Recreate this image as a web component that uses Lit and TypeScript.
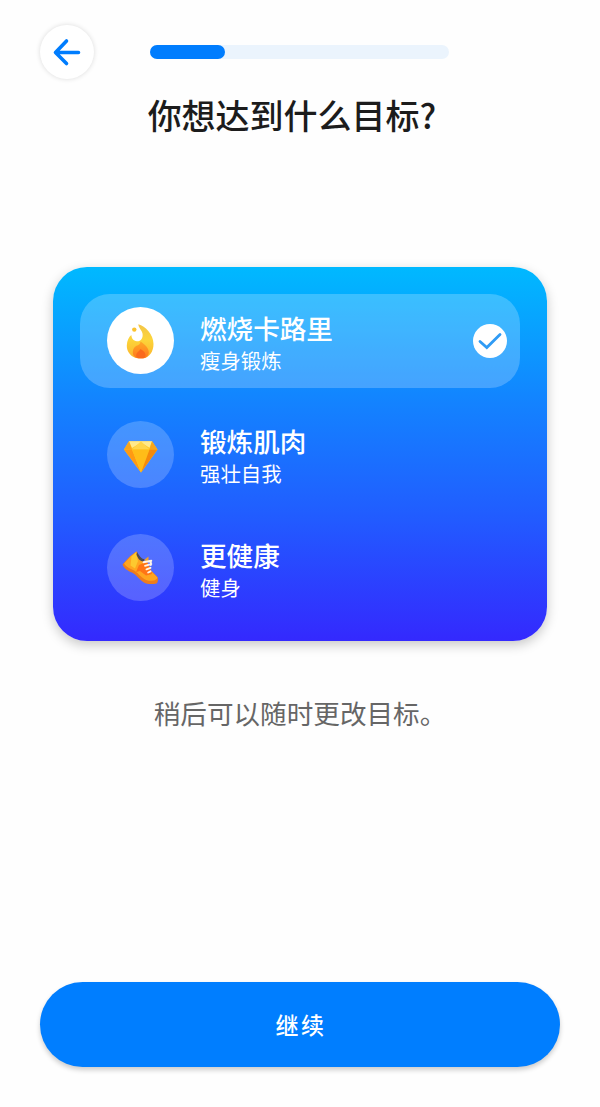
import { LitElement, html, css, svg } from 'lit';
import { customElement, property, state } from 'lit/decorators.js';
import { classMap } from 'lit/directives/class-map.js';

const flame = svg`
  <defs>
    <linearGradient id="fo" x1="0" y1="0" x2="0" y2="1">
      <stop offset="0" stop-color="#f3c548"/><stop offset=".45" stop-color="#fcd53a"/><stop offset="1" stop-color="#fbb42c"/>
    </linearGradient>
    <linearGradient id="fi" x1="0" y1="0" x2="0" y2="1">
      <stop offset="0" stop-color="#ffa827"/><stop offset="1" stop-color="#ff7a1c"/>
    </linearGradient>
  </defs>
  <path fill="url(#fo)" d="M31.300 17.300C38.500 19.500 46.300 27 46.500 37C46.500 44.500 42.500 51 35.500 51.300H30.500C24 50.500 19.600 44.500 19.800 38.500C20 33.500 21.800 30 24.300 28C24.800 31.500 26 33.800 30 34.300C34.200 34.300 36.300 30.500 35.500 26.500C34.800 23 31.500 21 31.300 17.300Z"/>
  <circle cx="27.300" cy="22.600" r="2.200" fill="#fbc22f"/>
  <path fill="url(#fi)" d="M33.500 34.500C37.500 37 42 41 41.800 45.500C41.500 49.300 38.800 51.300 35.500 51.300H31.500C28 51 25.600 48.500 25.800 45C26 42 27.500 39.800 29.500 38.800C31.500 38.500 33.300 37 33.500 34.500Z"/>
  <path fill="#fa6a1c" d="M33.500 42C36.800 44 38.800 46 38.500 48.500C38.200 50.500 36.800 51.300 35 51.300H32C30 51 29 49.800 29.200 48C29.500 45.500 32 44.500 33.500 42Z"/>`;

const gem = svg`
  <path fill="#ffc928" d="M22 20.300H45L50.500 28.500L34 51.500L17 28.500Z"/>
  <path fill="#ffe98c" d="M22 20.300H45L42.500 26.800L34 21.500L25 27Z"/>
  <path fill="#ffd54a" d="M34 20.300L42.500 28.500H25Z"/>
  <path fill="#f9a51b" d="M22 20.300L25 28.500H17ZM45 20.300L50.500 28.500H42.500Z"/>
  <path fill="#ff9a12" d="M17 28.500H25L34 51.500Z"/>
  <path fill="#ffbd18" d="M25 28.500H42.500L34 51.500Z"/>
  <path fill="#f58a0b" d="M50.500 28.500H42.500L34 51.500Z"/>`;

const shoe = svg`
  <path fill="#ef7d1a" d="M15.500 30.500L23 22.300L29.500 17.500L33 23L41 33.500L50 42.500C51.500 44.500 51.200 47 50 49.200C46 50.500 40 50.300 37 48.500C32 45.500 29.500 40.500 25 38.500C21 37 17 34.500 15.500 30.500Z"/>
  <path fill="#ffa51f" d="M17 29.500L24 22L29.500 17.500L32.500 24L41 34L50.500 43.500C49.500 47.500 41.500 47.500 38 45.500C33 42.500 30.500 38 26 36C22.500 34.500 18.500 32.500 17 29.500Z"/>
  <path fill="#fdc92f" d="M24.500 22.500L29 18.500L31 27L28 34.500L23.500 31.500Z"/>
  <path fill="#ff7416" d="M32 31L40 27.500L43.500 35L45 40L39 41.500L33 37L29 38Z"/>
  <path fill="#4a4a55" d="M30 18C31.500 20.500 34 25 37.700 25.300L36.500 27.500C32.500 27.500 30.500 23.500 29.500 20.500Z"/>
  <path fill="#f0a12a" d="M37.700 25.500L41.500 22.500L41.500 27L38 29Z"/>
  <path fill="none" stroke="#fff5e8" stroke-width="1.900" stroke-linecap="round" d="M36.500 28.300L44.300 26.700M38 31.800L44.300 30M39.500 35.300L43.500 33.800M41.200 38.500L43.500 37.300M43.800 27V31"/>`;

@customElement('goal-option')
class GoalOption extends LitElement {
  @property() heading = '';
  @property() caption = '';
  @property({ attribute: false }) icon: unknown;
  @property({ type: Boolean }) selected = false;

  static styles = css`
    :host { display: block; }
    .row {
      display: flex; align-items: center; box-sizing: border-box;
      height: 93.500px; padding: 0 13px 0 26.500px; border-radius: 30px; cursor: pointer;
    }
    .row.on { background: rgba(255, 255, 255, .22); }
    .disc {
      width: 67px; height: 67px; border-radius: 50%; flex: none;
      background: rgba(255, 255, 255, .2);
    }
    .on .disc { background: #fff; }
    .disc svg { display: block; width: 67px; height: 67px; }
    .text { flex: 1; padding: 2px 0 0 26.500px; color: #fff; }
    .heading { font-size: 26.600px; line-height: 36px; font-weight: 500; }
    .caption { font-size: 20.400px; line-height: 28px; }
    .check { width: 34px; height: 34px; flex: none; }
  `;

  render() {
    return html`
      <div class=${classMap({ row: true, on: this.selected })}>
        <div class="disc"><svg viewBox="0 0 67 67">${this.icon}</svg></div>
        <div class="text">
          <div class="heading">${this.heading}</div>
          <div class="caption">${this.caption}</div>
        </div>
        ${this.selected
          ? html`<svg class="check" viewBox="0 0 34 34">
              <circle cx="17" cy="17" r="17" fill="#fff"/>
              <path d="M7 17.500L13.800 23.500L27 10.500" fill="none" stroke="#2f9bf5" stroke-width="2.800" stroke-linecap="round"/>
            </svg>`
          : ''}
      </div>`;
  }
}

const goals = [
  { heading: '燃烧卡路里', caption: '瘦身锻炼', icon: flame },
  { heading: '锻炼肌肉', caption: '强壮自我', icon: gem },
  { heading: '更健康', caption: '健身', icon: shoe },
];

@customElement('app-root')
class AppRoot extends LitElement {
  @state() private chosen = 0;
  private progress = 25;

  static styles = css`
    :host {
      display: flex; flex-direction: column; box-sizing: border-box;
      height: 1107px; padding: 24px 40px 40px; background: #fefefe; overflow: hidden;
      font-family: "Noto Sans CJK SC", sans-serif;
    }
    header { display: flex; align-items: center; height: 55px; }
    .back {
      width: 54px; height: 54px; border: 0; padding: 0; border-radius: 50%; background: #fff;
      box-shadow: 0 0 5px rgba(0, 0, 0, .14);
    }
    .back svg { display: block; width: 54px; height: 54px; }
    .track { width: 299px; height: 14px; margin-left: 56px; border-radius: 7px; background: #ebf4fd; }
    .fill { height: 100%; border-radius: 7px; background: #007dfe; }
    h1 {
      margin: 11px 16px 0 0; text-align: center; white-space: nowrap;
      font-size: 34px; line-height: 50px; font-weight: 500; color: #1c1c1c;
    }
    .card {
      display: flex; flex-direction: column; gap: 20px; box-sizing: border-box;
      height: 374px; margin: 127px 13px 0; padding: 27px 27px 0; border-radius: 34px;
      background: linear-gradient(#00b9ff 0%, #1383ff 36%, #215dff 66%, #3429fe 100%);
      box-shadow: 0 4px 12px rgba(0, 0, 0, .22);
    }
    .hint {
      margin: 52px 0 0; text-align: center; white-space: nowrap;
      font-size: 26.600px; line-height: 40px; color: #666;
    }
    .next {
      height: 85px; margin-top: auto; border: 0; border-radius: 42.500px; background: #007eff;
      box-shadow: 0 3px 5px rgba(0, 0, 0, .2); color: #fff; padding: 0 0 2px 2px;
      font: 500 23px/34px "Noto Sans CJK SC", sans-serif; letter-spacing: 2.500px;
    }
  `;

  render() {
    return html`
      <header>
        <button class="back" aria-label="返回">
          <svg viewBox="0 0 54 54" fill="none" stroke="#007dfe" stroke-width="3.600" stroke-linecap="round" stroke-linejoin="round">
            <path d="M38.500 27.500H15.500M26.500 16L15.500 27.500L26.500 38.500"/>
          </svg>
        </button>
        <div class="track"><div class="fill" style="width:${this.progress}%"></div></div>
      </header>
      <h1>你想达到什么目标?</h1>
      <section class="card">
        ${goals.map((g, i) => html`
          <goal-option .heading=${g.heading} .caption=${g.caption} .icon=${g.icon}
            .selected=${i === this.chosen} @click=${() => (this.chosen = i)}></goal-option>`)}
      </section>
      <p class="hint">稍后可以随时更改目标。</p>
      <button class="next">继续</button>`;
  }
}
